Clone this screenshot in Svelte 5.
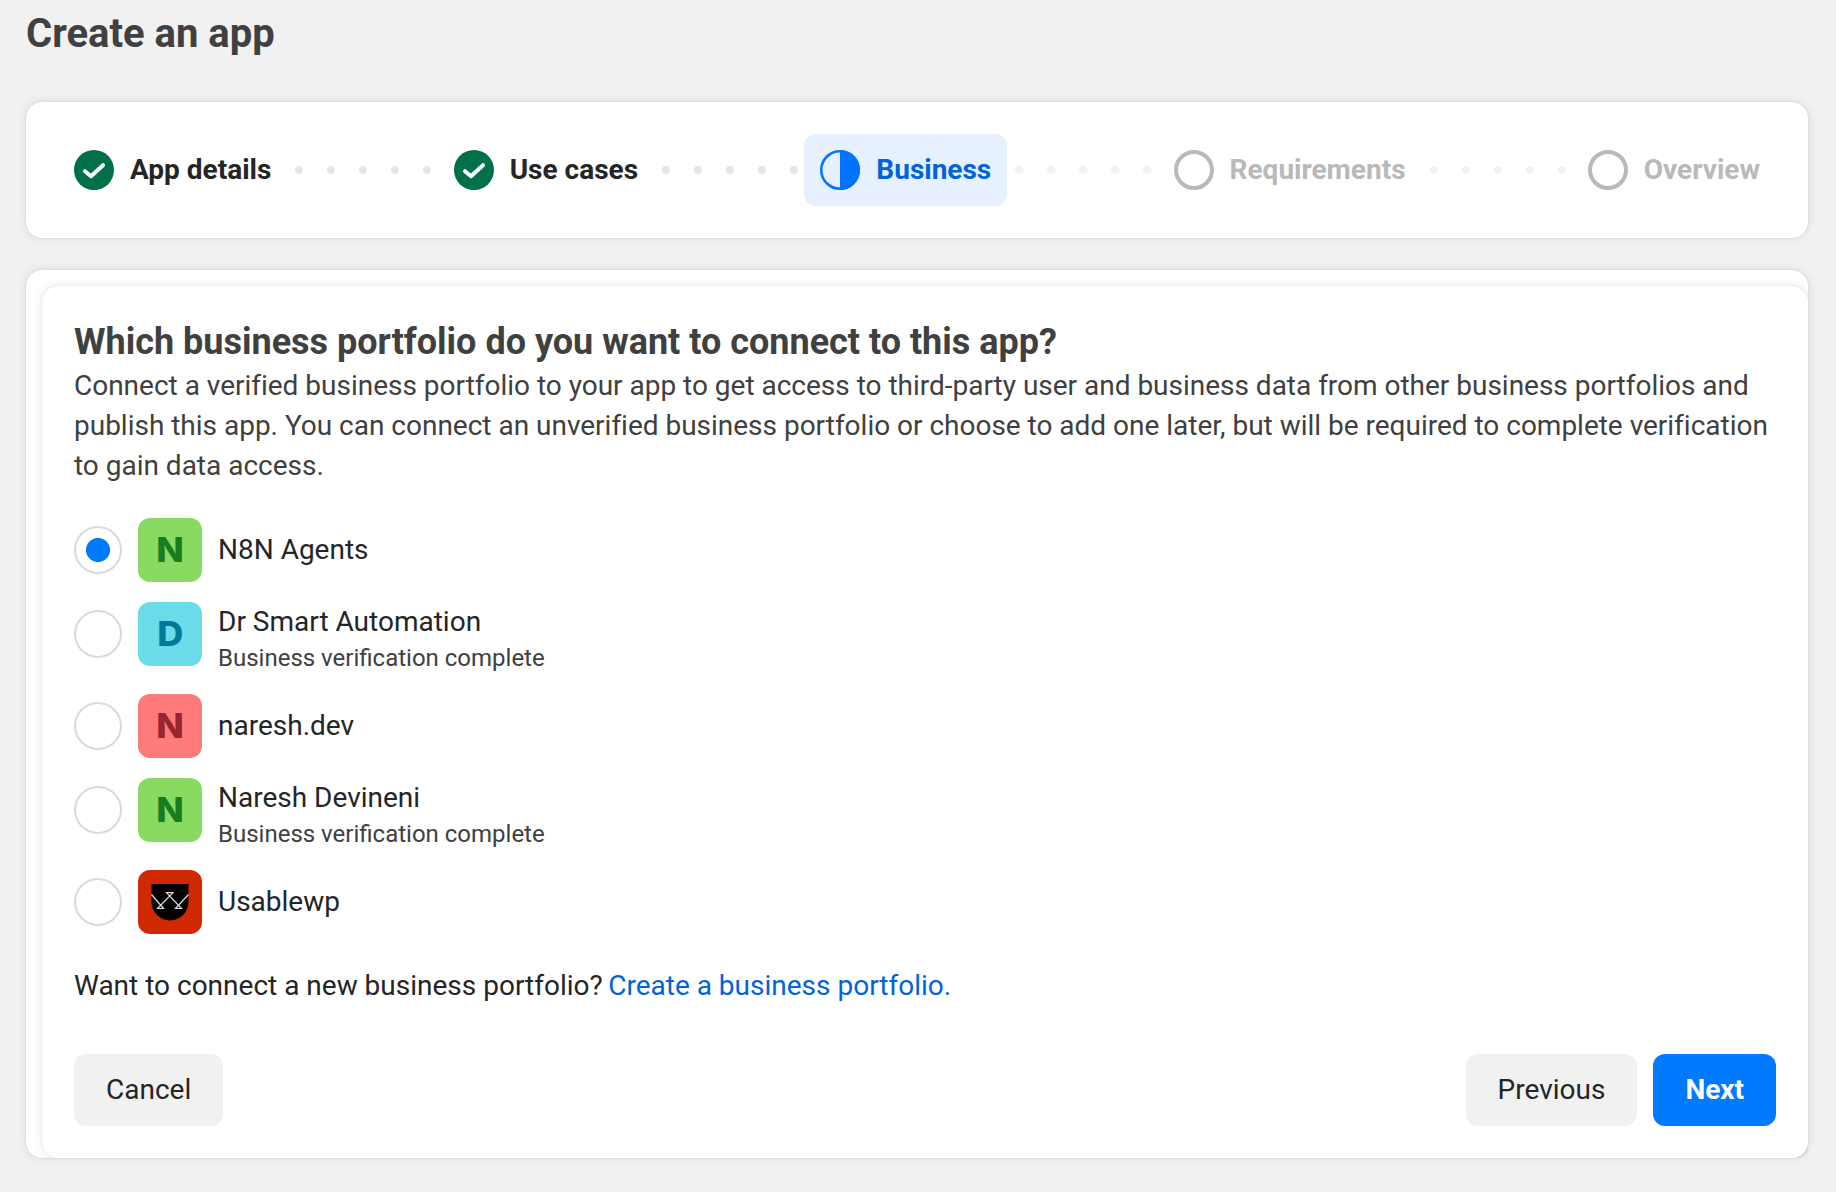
<script lang="ts">
	type StepState = 'done' | 'current' | 'todo';

	const steps: { label: string; state: StepState }[] = [
		{ label: 'App details', state: 'done' },
		{ label: 'Use cases', state: 'done' },
		{ label: 'Business', state: 'current' },
		{ label: 'Requirements', state: 'todo' },
		{ label: 'Overview', state: 'todo' }
	];

	const portfolios = [
		{ id: 'n8n', name: 'N8N Agents', letter: 'N', tone: 'green', verified: false },
		{ id: 'smart', name: 'Dr Smart Automation', letter: 'D', tone: 'cyan', verified: true },
		{ id: 'dev', name: 'naresh.dev', letter: 'N', tone: 'coral', verified: false },
		{ id: 'naresh', name: 'Naresh Devineni', letter: 'N', tone: 'green', verified: true },
		{ id: 'usable', name: 'Usablewp', letter: '', tone: 'red', verified: false }
	];

	let selected = $state('n8n');
</script>

<main>
	<h1>Create an app</h1>

	<nav class="card steps">
		{#each steps as step, i (step.label)}
			<div class="step {step.state}">
				<svg width="40" height="40" viewBox="0 0 40 40">
					{#if step.state === 'done'}
						<circle cx="20" cy="20" r="20" fill="#006f4b" />
						<path
							d="M11 21.2 L17 26.2 L29 15.2"
							fill="none"
							stroke="#fff"
							stroke-width="4"
							stroke-linecap="round"
							stroke-linejoin="round"
						/>
					{:else if step.state === 'current'}
						<circle cx="20" cy="20" r="18.75" fill="none" stroke="#0074ff" stroke-width="2.5" />
						<path d="M20 0a20 20 0 0 1 0 40z" fill="#0074ff" />
					{:else}
						<circle cx="20" cy="20" r="18" fill="none" stroke="#b9b9b9" stroke-width="4" />
					{/if}
				</svg>
				<span>{step.label}</span>
			</div>
			{#if i < steps.length - 1}
				<div class="dots" class:faint={i > 1}>
					{#each { length: 5 } as _}
						<i></i>
					{/each}
				</div>
			{/if}
		{/each}
	</nav>

	<div class="card outer">
		<section class="card panel">
			<h2>Which business portfolio do you want to connect to this app?</h2>
			<p class="intro">
				Connect a verified business portfolio to your app to get access to third-party user and
				business data from other business portfolios and publish this app. You can connect an
				unverified business portfolio or choose to add one later, but will be required to complete
				verification to gain data access.
			</p>

			<div class="list">
				{#each portfolios as item (item.id)}
					<label class="row">
						<input type="radio" name="portfolio" value={item.id} bind:group={selected} />
						<span class="avatar {item.tone}">
							{#if item.letter}
								<b>{item.letter}</b>
							{:else}
								<svg width="64" height="64" viewBox="0 0 64 64">
									<path d="M13.5 14h37v18a18.5 18.5 0 0 1-37 0z" fill="#000" />
									<g fill="none" stroke="#ddd" stroke-width="1.2">
										<path d="M13.5 24.5 25.5 38.5H19.5L35 22.7H28.5L43.5 38.5H37.5L50.5 24.5" />
									</g>
								</svg>
							{/if}
						</span>
						<span class="text">
							<span class="name">{item.name}</span>
							{#if item.verified}
								<span class="sub">Business verification complete</span>
							{/if}
						</span>
					</label>
				{/each}
			</div>

			<p class="more">
				Want to connect a new business portfolio? <a href="#create">Create a business portfolio.</a>
			</p>

			<footer>
				<button>Cancel</button>
				<div class="right">
					<button>Previous</button>
					<button class="primary">Next</button>
				</div>
			</footer>
		</section>
	</div>
</main>

<style>
	:global(body) {
		margin: 0;
		background: #f1f1f1;
	}
	main {
		box-sizing: border-box;
		height: 1192px;
		padding: 10px 28px 0 26px;
		overflow: hidden;
		font-family: Roboto, 'Liberation Sans', sans-serif;
		font-size: 28px;
		line-height: 40px;
		color: #242526;
	}
	h1 {
		margin: 0 0 44px;
		font-size: 40px;
		line-height: 48px;
		font-weight: 700;
		color: #404040;
	}
	h2 {
		margin: 0;
		font-size: 36px;
		line-height: 44px;
		font-weight: 700;
		color: #404040;
	}
	p {
		margin: 0;
	}
	.card {
		border-radius: 16px;
		background: #fff;
		box-shadow:
			0 0 2px rgba(0, 0, 0, 0.1),
			0 0 10px rgba(0, 0, 0, 0.1);
	}
	.steps {
		box-sizing: border-box;
		display: flex;
		align-items: center;
		height: 136px;
		padding: 0 32px;
		font-weight: 700;
	}
	.step {
		display: flex;
		align-items: center;
		gap: 16px;
		height: 72px;
		padding: 0 16px;
		border-radius: 12px;
		white-space: nowrap;
	}
	.step.current {
		background: #e7f0ff;
		color: #0064d9;
	}
	.step.todo {
		color: #b9b9b9;
	}
	.dots {
		flex: 1;
		display: flex;
		gap: 24px;
		padding-left: 8px;
	}
	.dots i {
		width: 8px;
		height: 8px;
		border-radius: 50%;
		background: #e4e6e6;
	}
	.dots.faint i {
		background: #f2f2f2;
	}
	.outer {
		height: 872px;
		margin-top: 32px;
		padding: 16px 0 0 16px;
	}
	.panel {
		box-sizing: border-box;
		height: 872px;
		padding: 34px 32px 32px;
		clip-path: inset(-16px 0 0 -16px);
	}
	.intro {
		margin-top: 2px;
		letter-spacing: -0.012px;
		font-variant-ligatures: common-ligatures;
		color: #404040;
	}
	.list {
		display: flex;
		flex-direction: column;
		gap: 20px;
		margin-top: 32px;
	}
	.row {
		display: flex;
		align-items: flex-start;
		gap: 16px;
	}
	input {
		appearance: none;
		box-sizing: border-box;
		flex: none;
		width: 48px;
		height: 48px;
		margin: 8px 0 0;
		border: 2px solid #dadada;
		border-radius: 50%;
		background: #fff;
	}
	input:checked {
		background: radial-gradient(circle, #007aff 11.6px, #fff 12.4px);
	}
	.avatar {
		display: flex;
		align-items: center;
		justify-content: center;
		width: 64px;
		height: 64px;
		border-radius: 12px;
		overflow: hidden;
		font-family: Inter, sans-serif;
		font-size: 34px;
	}
	.avatar b {
		font-weight: 800;
		transform: scaleX(1.06);
	}
	.green {
		background: #88da60;
		color: #167e20;
	}
	.cyan {
		background: #6adbe8;
		color: #007a98;
	}
	.coral {
		background: #ff7b7b;
		color: #962530;
	}
	.red {
		background: #d02800;
	}
	.text {
		display: flex;
		flex-direction: column;
		justify-content: center;
		min-height: 64px;
	}
	.sub {
		font-size: 24px;
		line-height: 32px;
		color: #404040;
	}
	.more {
		margin-top: 32px;
	}
	a {
		margin-left: -1.5px;
		color: #0064d9;
		text-decoration: none;
	}
	footer {
		display: flex;
		justify-content: space-between;
		margin-top: 48px;
	}
	.right {
		display: flex;
		gap: 16px;
	}
	button {
		height: 72px;
		padding: 0 32px;
		border: 0;
		border-radius: 12px;
		background: #f1f1f1;
		color: #242526;
		font: inherit;
	}
	.primary {
		background: #007aff;
		color: #fff;
		font-weight: 700;
	}
</style>
